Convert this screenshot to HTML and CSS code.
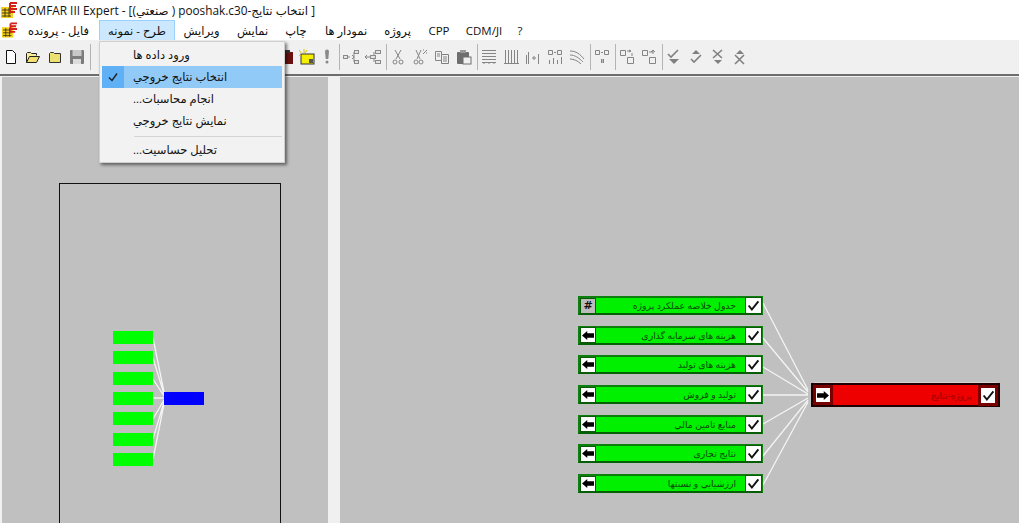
FILE: index.html
```html
<!DOCTYPE html>
<html lang="fa">
<head>
  <meta charset="UTF-8" />
  <title>COMFAR III Expert</title>
  <link rel="stylesheet" href="styles.css">
</head>
<body>
  <div class="app">
    <div class="titlebar">
      <svg class="logo" viewBox="0 0 17 16"><rect x="0" y="5" width="12" height="11" fill="#f2d21e"/><path d="M1 8h9M1 11h9M1 14h9M4 6v9M8 6v9" stroke="#4a3a10" stroke-width="1"/><path d="M9 1h7M9 4h6M9 7h7M9 10h5M9 1v10" stroke="#d2201a" stroke-width="2" fill="none"/></svg>
      <span dir="ltr">COMFAR III Expert - [(صنعتي ) pooshak.c30-انتخاب نتايج ]</span>
    </div>

    <div class="menubar">
      <svg class="logo" viewBox="0 0 17 16"><rect x="0" y="5" width="12" height="11" fill="#f2d21e"/><path d="M1 8h9M1 11h9M1 14h9M4 6v9M8 6v9" stroke="#4a3a10" stroke-width="1"/><path d="M9 1h7M9 4h6M9 7h7M9 10h5M9 1v10" stroke="#d2201a" stroke-width="2" fill="none"/></svg>
      <div class="menu-item">فایل - پرونده</div>
      <div class="menu-item active">طرح - نمونه</div>
      <div class="menu-item">ویرایش</div>
      <div class="menu-item">نمایش</div>
      <div class="menu-item">چاپ</div>
      <div class="menu-item">نمودار ها</div>
      <div class="menu-item">پروژه</div>
      <div class="menu-item">CPP</div>
      <div class="menu-item">CDM/JI</div>
      <div class="menu-item">?</div>
    </div>

    <div class="toolbar">
      <div class="btn"><svg viewBox="0 0 16 16"><path d="M3.5 1.5h6l3 3v10h-9z" fill="#fff" stroke="#111"/></svg></div>
      <div class="btn"><svg viewBox="0 0 16 16"><path d="M1.5 13.5v-9l1-1h3l1 1h5v2" fill="#f7ee9a" stroke="#222"/><path d="M1.5 13.5l3-6h10l-3 6z" fill="#f2e070" stroke="#222"/></svg></div>
      <div class="btn"><svg viewBox="0 0 16 16"><path d="M2.5 13.5v-9l1-1h3l1 1h6v9z" fill="#ece070" stroke="#333"/></svg></div>
      <div class="btn"><svg viewBox="0 0 16 16"><rect x="1" y="1" width="14" height="14" rx="1" fill="#7c7c7c"/><rect x="3.5" y="1" width="9" height="6" fill="#c8c8c8"/><rect x="4" y="10" width="8" height="5" fill="#dcdcdc"/></svg></div>
      <div class="sep"></div>
      <div class="covered"></div>
      <div class="btn narrow"><svg viewBox="0 0 16 16"><rect x="3" y="3" width="11" height="12" fill="#6a1010"/><rect x="6" y="1" width="5" height="3" fill="#333"/></svg></div>
      <div class="btn narrow"><svg viewBox="0 0 16 16"><rect x="2" y="5" width="13" height="10" fill="#f4ee00" stroke="#333"/><rect x="10" y="10" width="4" height="4" fill="#555"/><path d="M3 5L0 1M5 4V0M2 7L0 6M6 4l2-3" stroke="#d8c400" fill="none"/></svg></div>
      <div class="btn narrow"><svg viewBox="0 0 16 16"><path d="M6 2.5a2 2 0 0 1 4 0l-.7 7.5H6.7z" fill="#8a8a8a"/><circle cx="8" cy="13" r="1.5" fill="#8a8a8a"/></svg></div>
      <div class="sep"></div>
      <div class="btn"><svg viewBox="0 0 16 16"><path class="ln" d="M4 8h3M9 6l2 2-2 2M11 3v10"/><rect class="bx" x="0.5" y="6.5" width="4" height="3"/><rect class="bx" x="11.5" y="1.5" width="4" height="3"/><rect class="bx" x="11.5" y="11.5" width="4" height="3"/></svg></div>
      <div class="btn"><svg viewBox="0 0 16 16"><path class="ln" d="M0 8h6M2 6L0 8l2 2M9 3v10"/><rect class="bx" x="5.5" y="6.5" width="5" height="3"/><rect class="bx" x="10.5" y="1.5" width="5" height="3"/><rect class="bx" x="10.5" y="11.5" width="5" height="3"/></svg></div>
      <div class="sep"></div>
      <div class="btn"><svg viewBox="0 0 16 16"><path class="ln" d="M5 1l5 9M11 1L6 10"/><circle class="ln" cx="5" cy="13" r="2"/><circle class="ln" cx="11" cy="13" r="2"/></svg></div>
      <div class="btn"><svg viewBox="0 0 16 16"><path class="ln" d="M4 1l4 9M9 1L5 10"/><circle class="ln" cx="4" cy="13" r="2"/><circle class="ln" cx="9" cy="13" r="2"/><path class="ln" d="M11 5l4-4M11 1h1M14 4h1"/></svg></div>
      <div class="btn"><svg viewBox="0 0 16 16"><path class="ln" d="M1.5 2.5h6v9h-6zM3 5h3M3 7h3"/><path d="M7.5 5.5h7v9h-7z" fill="#f0f0f0" stroke="#808080"/><path class="ln" d="M9 8h4M9 10h4M9 12h4"/></svg></div>
      <div class="btn"><svg viewBox="0 0 16 16"><rect x="1" y="3" width="12" height="12" rx="1" fill="#6e6e6e"/><rect x="4" y="1" width="6" height="3" fill="#9a9a9a"/><rect x="7" y="8" width="8" height="7" fill="#f0f0f0" stroke="#707070"/></svg></div>
      <div class="sep"></div>
      <div class="btn"><svg viewBox="0 0 16 16"><path class="ln" d="M1 1.5h14M1 4.5h14M1 7.5h14M1 10.5h14M1 13.5h14M3 15v-1M8 15v-1M13 15v-1"/></svg></div>
      <div class="btn"><svg viewBox="0 0 16 16"><path class="ln" d="M2.5 1v13M5.5 1v13M8.5 1v13M11.5 1v13M14.5 1v13M1 14.5h15"/></svg></div>
      <div class="btn"><svg viewBox="0 0 16 16"><path class="ln" d="M1.5 6v9M3.5 3v12M7 9h4M9 7v4M13.5 5v10"/></svg></div>
      <div class="btn"><svg viewBox="0 0 16 16"><path class="ln" d="M1.5 1.5h4v4h-4zM10.5 1.5h4v4h-4zM7 3.5h2M2.5 11v4M6.5 9v6M10.5 11v4M14.5 8v7" /></svg></div>
      <div class="btn"><svg viewBox="0 0 16 16"><path class="ln" d="M1 2c6 0 10 3 14 8M1 6c5 0 9 3 13 7M1 10c4 0 8 2 11 5"/></svg></div>
      <div class="sep"></div>
      <div class="btn"><svg viewBox="0 0 16 16"><path class="ln" d="M1.5 1.5h4v4h-4zM10.5 1.5h4v4h-4zM7 3.5h2M7 11h3M7 13h3M7.5 10v4M9.5 10v4"/></svg></div>
      <div class="sep"></div>
      <div class="btn"><svg viewBox="0 0 16 16"><path class="ln" d="M1.5 1.5h5v5h-5zM8 2h4M10 1l2 1-2 1M13 4v3M8.5 8.5h6v6h-6z"/></svg></div>
      <div class="btn"><svg viewBox="0 0 16 16"><path class="ln" d="M1.5 1.5h5v5h-5zM8 3h4M12 5V1M10 3l2-2 2 2M8.5 8.5h6v6h-6z"/></svg></div>
      <div class="sep"></div>
      <div class="btn"><svg viewBox="0 0 16 16"><path class="mk" d="M2 5l3 3 7-7"/><path d="M3 10h10l-5 5z" fill="#808080"/></svg></div>
      <div class="btn"><svg viewBox="0 0 16 16"><path d="M4 5l4-4 4 4z" fill="#808080"/><path class="mk" d="M3 10l3 3 7-7"/></svg></div>
      <div class="btn"><svg viewBox="0 0 16 16"><path class="mk" d="M3 1l9 8M12 1L3 9"/><path d="M4 11h8l-4 4z" fill="#808080"/></svg></div>
      <div class="btn"><svg viewBox="0 0 16 16"><path d="M4 5l4-4 4 4z" fill="#808080"/><path class="mk" d="M3 6l9 9M12 6l-9 9"/></svg></div>
    </div>

    <div class="panes">
      <div class="pane left-pane">
        <div class="page-frame"></div>
        <svg class="wires" width="328" height="446">
          <path d="M153 261L164 315M153 281L164 317M153 302L164 319M153 321H164M153 342L164 323M153 362L164 325M153 382L164 327" />
        </svg>
        <div class="mini-list">
          <div class="mini"></div><div class="mini"></div><div class="mini"></div><div class="mini"></div><div class="mini"></div><div class="mini"></div><div class="mini"></div>
        </div>
        <div class="mini-main"></div>
      </div>
      <div class="splitter"></div>
      <div class="pane right-pane">
        <svg class="wires" width="679" height="446">
          <path d="M423 226L468 313M423 261L468 315M423 290L468 317M423 318H468M423 347L468 321M423 379L468 323M423 408L468 325" />
        </svg>
        <div class="node-list">
          <div class="node">
            <span class="cell cell-grid">#</span>
            <span class="label" dir="rtl">جدول خلاصه عملکرد پروژه</span>
            <span class="cell cell-check"><svg viewBox="0 0 16 16"><path d="M2 8l4 5 8-10" /></svg></span>
          </div>
          <div class="node">
            <span class="cell"><svg viewBox="0 0 16 12"><path class="arrow" d="M0 6l7-6v3h9v6H7v3z" /></svg></span>
            <span class="label" dir="rtl">هزینه های سرمایه گذاری</span>
            <span class="cell cell-check"><svg viewBox="0 0 16 16"><path d="M2 8l4 5 8-10" /></svg></span>
          </div>
          <div class="node">
            <span class="cell"><svg viewBox="0 0 16 12"><path class="arrow" d="M0 6l7-6v3h9v6H7v3z" /></svg></span>
            <span class="label" dir="rtl">هزینه های تولید</span>
            <span class="cell cell-check"><svg viewBox="0 0 16 16"><path d="M2 8l4 5 8-10" /></svg></span>
          </div>
          <div class="node">
            <span class="cell"><svg viewBox="0 0 16 12"><path class="arrow" d="M0 6l7-6v3h9v6H7v3z" /></svg></span>
            <span class="label" dir="rtl">تولید و فروش</span>
            <span class="cell cell-check"><svg viewBox="0 0 16 16"><path d="M2 8l4 5 8-10" /></svg></span>
          </div>
          <div class="node">
            <span class="cell"><svg viewBox="0 0 16 12"><path class="arrow" d="M0 6l7-6v3h9v6H7v3z" /></svg></span>
            <span class="label" dir="rtl">منابع تامین مالي</span>
            <span class="cell cell-check"><svg viewBox="0 0 16 16"><path d="M2 8l4 5 8-10" /></svg></span>
          </div>
          <div class="node">
            <span class="cell"><svg viewBox="0 0 16 12"><path class="arrow" d="M0 6l7-6v3h9v6H7v3z" /></svg></span>
            <span class="label" dir="rtl">نتایج تجاری</span>
            <span class="cell cell-check"><svg viewBox="0 0 16 16"><path d="M2 8l4 5 8-10" /></svg></span>
          </div>
          <div class="node">
            <span class="cell"><svg viewBox="0 0 16 12"><path class="arrow" d="M0 6l7-6v3h9v6H7v3z" /></svg></span>
            <span class="label" dir="rtl">ارزشیابي و نسبتها</span>
            <span class="cell cell-check"><svg viewBox="0 0 16 16"><path d="M2 8l4 5 8-10" /></svg></span>
          </div>
        </div>
        <div class="node node-root">
          <span class="cell"><svg viewBox="0 0 16 12"><path class="arrow" d="M16 6L9 0v3H0v6h9v3z" /></svg></span>
          <span class="label" dir="rtl">پروژه-نتایج</span>
          <span class="cell cell-check"><svg viewBox="0 0 16 16"><path d="M2 8l4 5 8-10" /></svg></span>
        </div>
      </div>
    </div>
  </div>

  <div class="dropdown">
    <div class="drop-item"><span class="tick"></span><span class="drop-text" dir="rtl">ورود داده ها</span></div>
    <div class="drop-item selected">
      <span class="tick"><svg viewBox="0 0 12 12" width="12" height="12"><path d="M2 6.5l3 3 5-7" /></svg></span>
      <span class="drop-text" dir="rtl">انتخاب نتايج خروجي</span>
    </div>
    <div class="drop-item"><span class="tick"></span><span class="drop-text" dir="rtl">انجام محاسبات...</span></div>
    <div class="drop-item"><span class="tick"></span><span class="drop-text" dir="rtl">نمایش نتايج خروجي</span></div>
    <div class="drop-sep"></div>
    <div class="drop-item"><span class="tick"></span><span class="drop-text" dir="rtl">تحلیل حساسیت...</span></div>
  </div>
</body>
</html>
```

FILE: styles.css
```css
* {
  margin: 0;
  padding: 0;
  box-sizing: border-box;
}

body {
  width: 1019px;
  height: 523px;
  overflow: hidden;
  position: relative;
  background: #fff;
  color: #111;
  font-family: "Open Sans", "DejaVu Sans", sans-serif;
  font-size: 12px;
}

.app {
  display: flex;
  flex-direction: column;
  height: 100%;
}

.logo {
  width: 17px;
  height: 16px;
  flex: none;
}

.titlebar {
  height: 20px;
  display: flex;
  align-items: center;
  gap: 1px;
  font-size: 11.8px;
  white-space: nowrap;
  padding-left: 1px;
}

.menubar {
  height: 20px;
  display: grid;
  grid-template-columns: 18px 81px 76px 53px 49px 38px 62px 41px 42px 48px 24px;
  align-items: stretch;
}

.menubar .logo {
  align-self: center;
  margin-left: 2px;
  width: 16px;
}

.menu-item {
  display: flex;
  align-items: center;
  justify-content: center;
  white-space: nowrap;
  font-size: 11.5px;
}

.menu-item.active {
  background: #cce8ff;
  border: 1px solid #99d1ff;
  border-bottom: 0;
}

.toolbar {
  height: 36px;
  display: flex;
  align-items: center;
  background: #f0f0f0;
  border-bottom: 2px solid #6d6d6d;
}

.btn {
  width: 22px;
  height: 22px;
  flex: none;
  display: flex;
  align-items: center;
  justify-content: center;
}

.btn.narrow {
  width: 20px;
}

.btn svg {
  width: 16px;
  height: 16px;
}

.ln {
  fill: none;
  stroke: #858585;
  stroke-width: 1;
}

.bx {
  fill: #e4e4e4;
  stroke: #8a8a8a;
  stroke-width: 1;
}

.mk {
  fill: none;
  stroke: #808080;
  stroke-width: 1.6;
}

.sep {
  width: 1px;
  height: 26px;
  margin-left: 2px;
  flex: none;
  background: #b4b4b4;
}

.covered {
  width: 186px;
  flex: none;
}

.panes {
  flex: 1;
  display: flex;
  padding-top: 1px;
  background: #f0f0f0;
  min-height: 0;
}

.pane {
  position: relative;
  background: #c0c0c0;
  overflow: hidden;
}

.left-pane {
  width: 326px;
  margin-left: 2px;
}

.splitter {
  width: 12px;
  flex: none;
}

.right-pane {
  flex: 1;
}

.wires {
  position: absolute;
  top: 0;
  left: 0;
}

.left-pane .wires {
  left: -2px;
}

.wires path {
  fill: none;
  stroke: #f4f4f4;
  stroke-width: 1.3;
}

.page-frame {
  position: absolute;
  left: 57px;
  top: 106px;
  width: 222px;
  height: 400px;
  border: 1px solid #111;
}

.mini-list {
  position: absolute;
  left: 111px;
  top: 254px;
  display: flex;
  flex-direction: column;
  gap: 7.35px;
}

.mini {
  width: 40px;
  height: 13px;
  background: #00ff00;
}

.mini-main {
  position: absolute;
  left: 162px;
  top: 315px;
  width: 40px;
  height: 13px;
  background: #0000ff;
}

.node-list {
  position: absolute;
  left: 238px;
  top: 219px;
  display: flex;
  flex-direction: column;
  gap: 10.7px;
}

.node {
  width: 185px;
  height: 19px;
  display: flex;
  align-items: center;
  background: #00f000;
  border: 2px solid #0d7f0d;
  border-bottom-color: #056005;
}

.cell {
  width: 14px;
  height: 14px;
  flex: none;
  margin-left: 1px;
  display: flex;
  align-items: center;
  justify-content: center;
  background: #fff;
  box-shadow: 0 0 0 1px #0a5a0a;
}

.cell svg {
  width: 12px;
  height: 9px;
}

.arrow {
  fill: #000;
}

.cell-grid {
  background: #bcbcbc;
  font-family: "DejaVu Sans", sans-serif;
  font-weight: bold;
  font-size: 11px;
  line-height: 1;
}

.cell-check {
  width: 15px;
  height: 15px;
  margin-left: 0;
}

.cell-check svg {
  width: 13px;
  height: 13px;
}

.cell-check path {
  fill: none;
  stroke: #111;
  stroke-width: 2.4;
}

.label {
  flex: 1;
  padding-right: 10px;
  white-space: nowrap;
  overflow: hidden;
  font-size: 9.3px;
  color: #0a4a0a;
}

.node-root {
  position: absolute;
  left: 471px;
  top: 306px;
  width: 189px;
  height: 24px;
  background: #ee0000;
  border: 2px solid #200000;
  box-shadow: 0 -4px 0 -3px #d4d4d4;
}

.node-root .cell {
  margin-left: 3px;
  box-shadow: 0 0 0 3px #7a0000;
}

.node-root .cell-check {
  width: 14px;
  margin: 0 3px 0 0;
}

.node-root .label {
  color: #a00000;
  padding-right: 9px;
}

.dropdown {
  position: absolute;
  left: 99px;
  top: 41px;
  width: 186px;
  height: 122px;
  padding: 2px;
  background: #f2f2f2;
  border: 1px solid #cfcfcf;
  box-shadow: 2px 2px 3px rgba(0, 0, 0, 0.5);
}

.drop-item {
  height: 22px;
  display: flex;
  align-items: center;
  font-size: 11.5px;
  white-space: nowrap;
}

.drop-text {
  padding-bottom: 2px;
}

.tick {
  width: 22px;
  height: 100%;
  margin-right: 9px;
  flex: none;
  display: flex;
  align-items: center;
  justify-content: center;
}

.tick path {
  fill: none;
  stroke: #1a1a1a;
  stroke-width: 1.3;
}

.drop-item.selected {
  background: #91c9f7;
}

.drop-item.selected .tick {
  background: #5fb0f5;
}

.drop-sep {
  height: 1px;
  margin: 4px 0 2px 32px;
  background: #d4d4d4;
}
```
